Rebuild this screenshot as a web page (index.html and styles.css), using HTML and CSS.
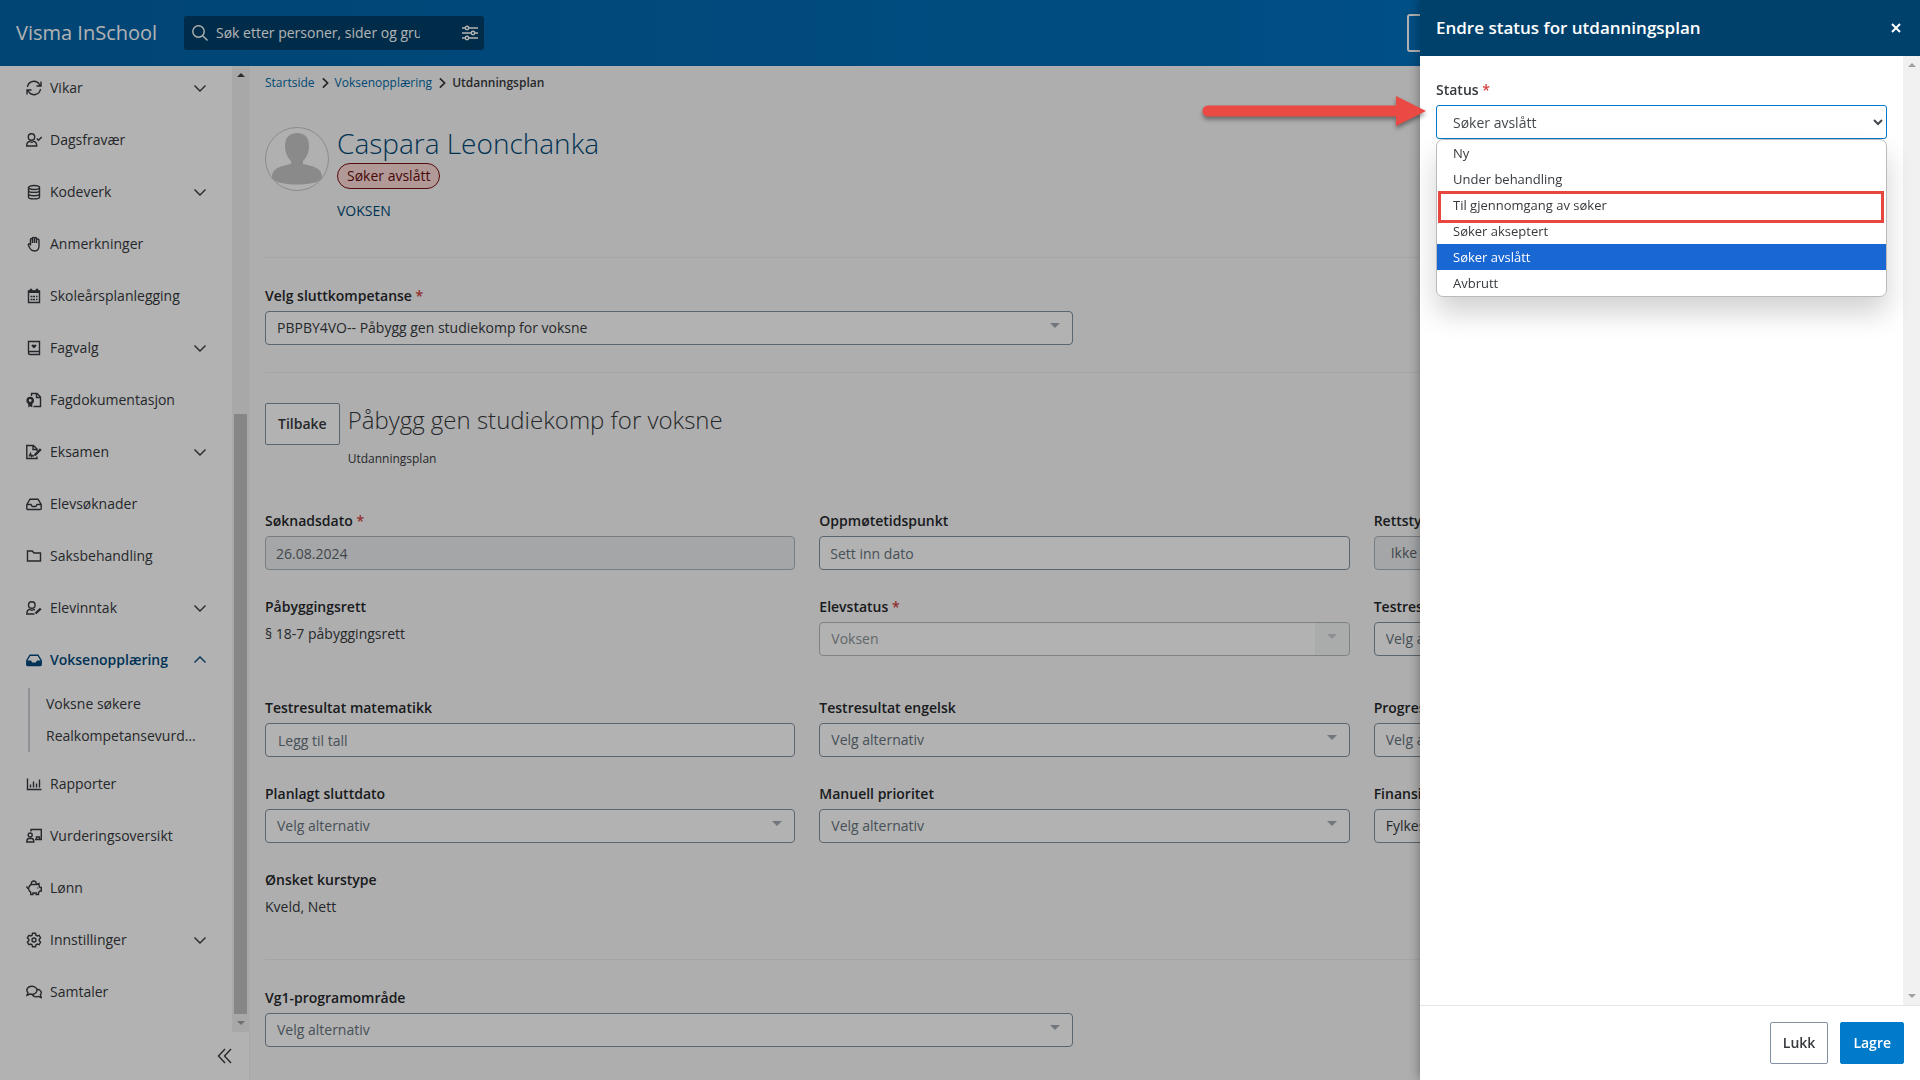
FILE: index.html
```html
<!DOCTYPE html>
<html lang="no">
<head>
  <meta charset="UTF-8">
  <title>Utdanningsplan - Visma InSchool</title>
  <link rel="stylesheet" href="styles.css">
</head>
<body>
  <svg class="sprite" aria-hidden="true">
    <symbol id="chevron" viewBox="0 0 14 14"><path d="M1.500 4.500l5.500 5.500 5.500-5.500"/></symbol>
  </svg>

  <header class="topbar">
    <a class="brand" href="#">Visma InSchool</a>
    <div class="search">
      <svg class="icon" viewBox="0 0 16 16"><circle cx="6.500" cy="6.500" r="5.700"/><path d="M10.700 10.700l4.800 4.800"/></svg>
      <input type="text" aria-label="Søk" placeholder="Søk etter personer, sider og grupper">
      <svg class="icon sliders" viewBox="0 0 16 16"><path d="M0 3h3M7 3h9M0 8h9M13 8h3M0 13h3M7 13h9"/><circle cx="5" cy="3" r="1.700"/><circle cx="11" cy="8" r="1.700"/><circle cx="5" cy="13" r="1.700"/></svg>
    </div>
    <button class="topbar-btn" type="button" aria-label="Meny"></button>
  </header>

  <div class="layout">
    <aside class="sidebar">
      <div class="sidebar-scroll">
        <nav class="nav">
          <a class="nav-item" href="#"><svg class="icon" viewBox="0 0 16 16"><path d="M1.500 7A6.500 6.500 0 0 1 13.500 4.500L15 6M15 1.500V6h-4.500M14.500 9A6.500 6.500 0 0 1 2.500 11.500L1 10M1 14.500V10h4.500"/></svg><span>Vikar</span><svg class="chev"><use href="#chevron"/></svg></a>
          <a class="nav-item" href="#"><svg class="icon" viewBox="0 0 16 16"><circle cx="5.500" cy="5" r="3.200"/><path d="M3.500 9.500C1.500 9.500.7 11.500.7 14h10c0-2.500-.8-4.500-3-4.500-1.200.8-3 .8-4.200 0zM10.800 6.500l1.700 1.700L15.700 5"/></svg><span>Dagsfravær</span></a>
          <a class="nav-item" href="#"><svg class="icon" viewBox="0 0 16 16"><ellipse cx="8" cy="3.500" rx="5.500" ry="2"/><path d="M2.500 3.500v9.500c0 2.500 11 2.500 11 0V3.500M2.500 6.500c0 2.500 11 2.500 11 0M2.500 9.800c0 2.500 11 2.500 11 0"/></svg><span>Kodeverk</span><svg class="chev"><use href="#chevron"/></svg></a>
          <a class="nav-item" href="#"><svg class="icon" viewBox="0 0 16 16"><path d="M4.500 8V3.500c0-1.300 2-1.300 2 0V7 2.300c0-1.300 2-1.300 2 0V7 2.500c0-1.300 2-1.300 2 0V7 4c0-1.300 2.500-1.300 2.500.2V10c0 3-1 5-4.500 5-2.500 0-3.500-.8-4.500-2.500L2.500 9.500c-.7-1.500.8-2.500 2-1V9.500"/></svg><span>Anmerkninger</span></a>
          <a class="nav-item" href="#"><svg class="icon" viewBox="0 0 16 16"><path d="M2.500 3h11v11.500h-11z"/><path class="heavy" d="M2.500 3.800h11M5 .8v3M11 .8v3"/><path d="M4.500 8.500h2M7 8.500h2M10 8.500h1.500M4.500 11.500h2M7 11.500h2M10 11.500h1.500"/></svg><span>Skoleårsplanlegging</span></a>
          <a class="nav-item" href="#"><svg class="icon" viewBox="0 0 16 16"><path d="M2.500 13V1.500h11v13H4a1.500 1.500 0 0 1 0-3h9.500"/><path class="solid" d="M8 8.600L5.700 6.200c-.8-1.500 1.300-2.600 2.300-1.100 1-1.500 3.100-.4 2.300 1.100z"/></svg><span>Fagvalg</span><svg class="chev"><use href="#chevron"/></svg></a>
          <a class="nav-item" href="#"><svg class="icon" viewBox="0 0 16 16"><path d="M5.500 4V1.500h5.500l3.500 3.500v9.500H7.500M10.500 1.500V5.500h4"/><circle class="heavy" cx="4.200" cy="8.500" r="2.600"/><path class="solid" d="M2.300 11.500V15.500l2-1.200 2 1.200V11.500z"/></svg><span>Fagdokumentasjon</span></a>
          <a class="nav-item" href="#"><svg class="icon" viewBox="0 0 16 16"><path d="M11 12.500v2H.8v-13h6.700L11 5v2M7 1.500v4h4M3 12.500l1.500-3 1 3 1-1 1.500.7"/><path class="heavy" d="M8.500 11.500l6.300-6.300"/></svg><span>Eksamen</span><svg class="chev"><use href="#chevron"/></svg></a>
          <a class="nav-item" href="#"><svg class="icon" viewBox="0 0 16 16"><path d="M.8 8.500L4 3.200h8l3.200 5.300v4a1 1 0 0 1-1 1H1.800a1 1 0 0 1-1-1zM.8 8.500h4.200l1.200 2h3.600l1.200-2h4.200"/></svg><span>Elevsøknader</span></a>
          <a class="nav-item" href="#"><svg class="icon" viewBox="0 0 16 16"><path d="M1.500 3h4.700l1.800 2h6.500v8h-13z"/></svg><span>Saksbehandling</span></a>
          <a class="nav-item" href="#"><svg class="icon" viewBox="0 0 16 16"><circle cx="5.800" cy="5" r="3.300"/><path d="M8.500 14H.8c0-3 1-4.500 3-4.500 1.200.8 3 .8 4.200 0l1 .2"/><path class="heavy" d="M9.500 13.500l5.300-5"/></svg><span>Elevinntak</span><svg class="chev"><use href="#chevron"/></svg></a>
          <a class="nav-item active" href="#"><svg class="icon" viewBox="0 0 16 16"><path d="M.8 8.500L4 3.200h8l3.200 5.300v4a1 1 0 0 1-1 1H1.800a1 1 0 0 1-1-1z"/><path class="solid" d="M.8 8.500h4.200l1.200 2h3.600l1.200-2h4.200v5H.8z"/></svg><span>Voksenopplæring</span><svg class="chev up"><use href="#chevron"/></svg></a>
          <div class="subnav">
            <a href="#">Voksne søkere</a>
            <a href="#">Realkompetansevurdering</a>
          </div>
          <a class="nav-item" href="#"><svg class="icon" viewBox="0 0 16 16"><path d="M1.500 2.500v11h14M4.500 11.500v-3M7.500 11.500v-6M10.500 11.500v-4M13.500 11.500v-8"/></svg><span>Rapporter</span></a>
          <a class="nav-item" href="#"><svg class="icon" viewBox="0 0 16 16"><path d="M5 3.500v-2h10.300v10H9M10.500 11v-2h3v2"/><circle cx="4.200" cy="7" r="2"/><path d="M.8 14c0-2 .8-3.500 2-3.500h3c1.200 0 2 1.500 2 3.500z"/></svg><span>Vurderingsoversikt</span></a>
          <a class="nav-item" href="#"><svg class="icon" viewBox="0 0 16 16"><path d="M5.500 4.500h5l2.500-1v2.200l1 1.800h1.300v3.500H14L12.500 12.500v2h-2.300V13H7v1.500H4.700v-2.300C2.500 11 2 8 3.500 6c.5-.7 1.200-1.300 2-1.500zM5.300 4.300c-.5-4.400 5.400-4.400 5 0M3 8.500C1.300 8.500.7 7.500.8 6.300M11.600 7.500v1"/></svg><span>Lønn</span></a>
          <a class="nav-item" href="#"><svg class="icon" viewBox="0 0 16 16"><path d="M6.500 1.300h3l.4 1.900 1.300.7 1.900-.6 1.500 2.500L13.200 7.200v1.600l1.400 1.400-1.500 2.500-1.900-.6-1.300.8-.4 1.800h-3l-.4-1.800-1.300-.8-1.900.6-1.500-2.500 1.400-1.400V7.200L1.400 5.800l1.500-2.500 1.900.6 1.300-.7z"/><circle cx="8" cy="8" r="2"/></svg><span>Innstillinger</span><svg class="chev"><use href="#chevron"/></svg></a>
          <a class="nav-item" href="#"><svg class="icon" viewBox="0 0 16 16"><path d="M1 11.300l1-2.600C-.8 5.500 2 2.300 5.700 2.300s6 2.500 5 5.200c-1 2.500-4 3.300-6.700 2.500zM11.200 5.200c3.500.3 5.200 3.300 3.100 5.800l1 2.600-3-1.200c-2.500.9-5.300 0-6.200-2"/></svg><span>Samtaler</span></a>
        </nav>
        <div class="scrollbar side-bar"><i class="arrow-up"></i><i class="thumb"></i><i class="arrow-down"></i></div>
      </div>
      <button class="collapse" type="button" aria-label="Skjul meny"><svg class="icon" viewBox="0 0 16 16"><path d="M8 1L1.500 8 8 15M14 1L7.500 8l6.500 7"/></svg></button>
    </aside>

    <main class="content">
      <nav class="breadcrumbs">
        <a href="#">Startside</a><svg class="chev"><use href="#chevron"/></svg>
        <a href="#">Voksenopplæring</a><svg class="chev"><use href="#chevron"/></svg>
        <span>Utdanningsplan</span>
      </nav>

      <section class="profile">
        <svg class="avatar" viewBox="0 0 64 64"><circle cx="32" cy="32" r="31.500" fill="#fcfcfc" stroke="#c8c8c8"/><path fill="#c6c6c6" d="M32 6c8 0 12 5 12 13 0 7-3 12-6 15v3c8 2 19 3 19 13 0 10-50 10-50 0 0-10 11-11 19-13v-3c-3-3-6-8-6-15 0-8 4-13 12-13z"/></svg>
        <div>
          <h1>Caspara Leonchanka</h1>
          <span class="badge">Søker avslått</span>
          <p>VOKSEN</p>
        </div>
      </section>

      <section class="block half">
        <div class="field">
          <label for="kompetanse">Velg sluttkompetanse <b>*</b></label>
          <div class="select"><select id="kompetanse" class="filled"><option>PBPBY4VO-- Påbygg gen studiekomp for voksne</option></select></div>
        </div>
      </section>

      <section class="block plan">
        <div class="plan-head">
          <button class="btn" type="button">Tilbake</button>
          <div>
            <h2>Påbygg gen studiekomp for voksne</h2>
            <p>Utdanningsplan</p>
          </div>
        </div>

        <div class="grid">
          <div class="field">
            <label for="soknadsdato">Søknadsdato <b>*</b></label>
            <input id="soknadsdato" type="text" value="26.08.2024" disabled>
          </div>
          <div class="field">
            <label for="oppmote">Oppmøtetidspunkt</label>
            <input id="oppmote" type="text" placeholder="Sett inn dato">
          </div>
          <div class="field">
            <label for="rettstype">Rettstype</label>
            <select id="rettstype" class="locked" disabled><option>Ikke rett</option></select>
          </div>

          <div class="field">
            <h3>Påbyggingsrett</h3>
            <p>§ 18-7 påbyggingsrett</p>
          </div>
          <div class="field">
            <label for="elevstatus">Elevstatus <b>*</b></label>
            <div class="select off"><select id="elevstatus" disabled><option>Voksen</option></select></div>
          </div>
          <div class="field">
            <label for="norsk">Testresultat norsk</label>
            <div class="select"><select id="norsk"><option>Velg alternativ</option></select></div>
          </div>

          <div class="field spaced">
            <label for="matematikk">Testresultat matematikk</label>
            <input id="matematikk" class="number" type="text" placeholder="Legg til tall">
          </div>
          <div class="field spaced">
            <label for="engelsk">Testresultat engelsk</label>
            <div class="select"><select id="engelsk"><option>Velg alternativ</option></select></div>
          </div>
          <div class="field spaced">
            <label for="progresjon">Progresjon</label>
            <div class="select"><select id="progresjon"><option>Velg alternativ</option></select></div>
          </div>

          <div class="field">
            <label for="sluttdato">Planlagt sluttdato</label>
            <div class="select"><select id="sluttdato"><option>Velg alternativ</option></select></div>
          </div>
          <div class="field">
            <label for="prioritet">Manuell prioritet</label>
            <div class="select"><select id="prioritet"><option>Velg alternativ</option></select></div>
          </div>
          <div class="field">
            <label for="finansiering">Finansiering</label>
            <div class="select"><select id="finansiering" class="filled"><option>Fylkeskommune</option></select></div>
          </div>

          <div class="field">
            <h3>Ønsket kurstype</h3>
            <p>Kveld, Nett</p>
          </div>
        </div>
      </section>

      <section class="block half">
        <div class="field">
          <label for="vg1">Vg1-programområde</label>
          <div class="select"><select id="vg1"><option>Velg alternativ</option></select></div>
        </div>
      </section>
    </main>
  </div>

  <div class="backdrop"></div>

  <div class="panel" role="dialog" aria-labelledby="panelTitle">
    <div class="panel-head">
      <h2 id="panelTitle">Endre status for utdanningsplan</h2>
      <button type="button" aria-label="Lukk"><svg viewBox="0 0 10 10"><path d="M1 1l8 8M9 1l-8 8"/></svg></button>
    </div>
    <div class="panel-body">
      <div class="panel-form">
        <label for="status">Status <b>*</b></label>
        <div class="status-wrap">
          <select id="status"><option>Søker avslått</option></select>
          <ul class="menu" role="listbox" aria-label="Status">
            <li role="option">Ny</li>
            <li role="option">Under behandling</li>
            <li role="option" class="marked">Til gjennomgang av søker</li>
            <li role="option">Søker akseptert</li>
            <li role="option" class="selected" aria-selected="true">Søker avslått</li>
            <li role="option">Avbrutt</li>
          </ul>
          <svg class="pointer" viewBox="0 0 228 34"><path d="M6 9.500h188V0l30 15-30 15v-9.500H6a5.500 5.500 0 0 1 0-11z"/></svg>
        </div>
      </div>
      <div class="scrollbar"><i class="arrow-up"></i><i class="arrow-down"></i></div>
    </div>
    <div class="panel-foot">
      <button class="btn" type="button">Lukk</button>
      <button class="btn primary" type="button">Lagre</button>
    </div>
  </div>
</body>
</html>
```

FILE: styles.css
```css
* { box-sizing: border-box; }
body {
  margin: 0;
  height: 100vh;
  overflow: hidden;
  display: flex;
  flex-direction: column;
  background: #fafafa;
  color: #36393d;
  font: 14px/20px "Open Sans", "Noto Sans", sans-serif;
}
h1, h2, h3, p, ul { margin: 0; padding: 0; }
a { color: inherit; text-decoration: none; }
input, select, button { font: inherit; color: inherit; }
.sprite { position: absolute; width: 0; height: 0; }
.icon, .chev {
  width: 16px;
  height: 16px;
  flex: none;
  fill: none;
  stroke: currentColor;
  stroke-width: 1.4;
}
.icon .heavy { stroke-width: 2.4; }
.icon .solid { fill: currentColor; stroke: none; }
.chev { width: 14px; height: 14px; }
.chev.up { transform: rotate(180deg); }

/* top bar */
.topbar {
  height: 66px;
  flex: none;
  display: flex;
  align-items: center;
  padding-left: 16px;
  background: linear-gradient(90deg, #0063a6, #0076c8);
  color: #fff;
}
.brand { width: 168px; font-size: 20px; line-height: 28px; }
.search {
  width: 300px;
  height: 34px;
  display: flex;
  align-items: center;
  gap: 8px;
  padding: 0 6px 0 8px;
  border-radius: 3px;
  background: #004069;
}
.search input {
  width: 204px;
  margin-right: auto;
  padding: 0;
  border: 0;
  background: none;
}
.search input::placeholder { color: #fff; opacity: 1; }
.topbar-btn {
  width: 140px;
  height: 38px;
  margin: 0 373px 0 auto;
  border: 2px solid #fff;
  border-radius: 3px;
  background: none;
}

/* sidebar */
.layout { flex: 1; min-height: 0; display: flex; }
.sidebar {
  width: 250px;
  flex: none;
  display: flex;
  flex-direction: column;
  border-right: 1px solid #f3f3f3;
  background: #fff;
}
.sidebar-scroll { flex: 1; min-height: 0; display: flex; }
.nav {
  flex: 1;
  min-width: 0;
  overflow: hidden;
  padding: 12px 25px 0 26px;
}
.nav-item { display: flex; align-items: center; gap: 8px; height: 20px; margin-bottom: 32px; }
.nav-item .chev { margin-left: auto; }
.nav-item.active { margin-bottom: 18px; color: #004a7b; font-weight: 600; }
.subnav {
  margin: 0 4px 22px 2px;
  padding-left: 16px;
  border-left: 2px solid #cdd2d8;
}
.subnav a {
  display: block;
  line-height: 32px;
  overflow: hidden;
  text-overflow: ellipsis;
  white-space: nowrap;
}
.collapse {
  height: 48px;
  flex: none;
  padding: 0 16px 2px 0;
  border: 0;
  background: none;
  text-align: right;
}
.collapse .icon { display: inline-block; vertical-align: middle; }

.scrollbar {
  width: 17px;
  flex: none;
  display: flex;
  flex-direction: column;
  align-items: center;
  justify-content: space-between;
  padding: 7px 0;
  background: #f1f1f1;
}
.scrollbar .thumb { width: 13px; flex: 0 0 63%; margin: auto 0 7px; background: #c1c1c1; }
.arrow-up, .arrow-down { border: 4px solid transparent; }
.arrow-up { border-top: 0; border-bottom-color: #a0a0a0; }
.arrow-down { border-bottom: 0; border-top-color: #a0a0a0; }
.side-bar .arrow-up { border-bottom-color: #404040; }

/* content */
.content { flex: 1; min-width: 0; overflow: hidden; padding: 7px 16px 0 15px; }
.breadcrumbs {
  display: flex;
  align-items: center;
  gap: 4px;
  font-size: 12px;
}
.breadcrumbs a { color: #0069a6; }
.breadcrumbs .chev { width: 12px; height: 12px; transform: rotate(-90deg); stroke-width: 2; }
.breadcrumbs span { font-weight: 600; }
.profile {
  height: 164px;
  display: flex;
  gap: 8px;
  padding-top: 32px;
  color: #004977;
}
.avatar { width: 64px; height: 64px; margin-top: 2px; }
h1 { font-size: 28px; line-height: 36px; font-weight: 300; }
.badge {
  display: inline-block;
  margin-top: 2px;
  padding: 2px 9px;
  border: 1px solid #7a0f10;
  border-radius: 14px;
  background: #fcdcd9;
  color: #6a0b0b;
}
.profile p { margin-top: 12px; }
.block { padding-top: 28px; border-top: 1px solid #ebedef; }
.half { height: 115px; }
.half .field { width: calc(50% - 12px); }
.field label, .field h3, .panel label { display: block; font-size: 14px; line-height: 20px; font-weight: 600; }
.field label, .field h3 { color: #26282b; }
.field p { padding-top: 7px; }
label b { color: #d43f3f; font-weight: 600; }
.field input, .field select {
  display: block;
  width: 100%;
  height: 34px;
  padding: 0 11px;
  border: 1px solid #8291a1;
  border-radius: 4px;
  background: #fff;
  color: #66737d;
  appearance: none;
}
.field input, .select, .field .locked { margin-top: 5px; }
.field input { padding: 0 10px; }
.field input.number { padding: 0 12px; }
.field input::placeholder { color: #66737d; opacity: 1; }
.field input:disabled, .field .locked { background: #eceef0; border-color: #aab4bc; color: #5e666e; opacity: 1; }
.field .locked { padding: 0 16px; }
.field select.filled { color: #36393d; }
.select { position: relative; }
.select::after {
  content: "";
  position: absolute;
  top: 12px;
  right: 13px;
  border: 5px solid transparent;
  border-top-color: #a3abb2;
  border-bottom: 0;
}
.off select { opacity: 1; border-color: #b4bac0; color: #8d9499; background: linear-gradient(#f4f6f7, #f4f6f7) right / 34px 100% no-repeat #fff; }
.off::after { border-top-color: #c9ced1; }

.plan { padding-top: 30px; height: 587px; }
.plan-head { display: flex; gap: 8px; height: 108px; }
.plan-head h2 { font-size: 24px; line-height: 34px; font-weight: 300; }
.plan-head p { margin-top: 12px; font-size: 12px; }
.btn {
  height: 42px;
  padding: 0 12px;
  border: 1px solid #8291a1;
  border-radius: 2px;
  background: #fff;
  font-weight: 600;
}
.btn.primary { background: #007aca; border-color: #007aca; color: #fff; }
.grid { display: grid; grid-template-columns: repeat(3, 1fr); gap: 27px 24px; }
.spaced { padding-top: 15px; }

/* dialog */
.backdrop { position: fixed; inset: 0; background: rgba(0, 0, 0, 0.3); }
.panel {
  position: fixed;
  top: 0;
  right: 0;
  bottom: 0;
  width: 500px;
  display: flex;
  flex-direction: column;
  background: #fff;
  box-shadow: 0 0 12px rgba(0, 0, 0, 0.4);
}
.panel-head {
  height: 56px;
  flex: none;
  display: flex;
  align-items: center;
  justify-content: space-between;
  padding: 0 15px 0 16px;
  background: #00416c;
  color: #fff;
}
.panel-head h2 { font-size: 17px; line-height: 24px; font-weight: 600; }
.panel-head button { padding: 4px; border: 0; background: none; }
.panel-head svg { display: block; width: 10px; height: 10px; stroke: #fff; stroke-width: 2; }
.panel-body { flex: 1; display: flex; }
.panel-form { flex: 1; padding: 24px 16px; }
.status-wrap { position: relative; margin-top: 5px; }
#status {
  display: block;
  width: 100%;
  height: 34px;
  padding: 0 0 0 12px;
  border: 1px solid #0078c8;
  border-radius: 3px;
  background: #fff;
  color: #45494d;
}
.menu {
  position: absolute;
  top: 100%;
  left: 0;
  right: 0;
  border: 1px solid #bbb;
  border-radius: 7px;
  background: #fff;
  box-shadow: 0 16px 28px rgba(0, 0, 0, 0.18);
  font-size: 13px;
  list-style: none;
}
.menu li { position: relative; height: 26px; padding: 0 16px; line-height: 26px; }
.menu .selected { background: #1967d2; color: #fff; }
/* red frame round the step to choose */
.menu .marked::after {
  content: "";
  position: absolute;
  z-index: 1;
  inset: -1px 2px -5px 1px;
  border: 3px solid #e8473f;
}
.pointer {
  position: absolute;
  top: -9px;
  right: 100%;
  margin-right: 6px;
  width: 228px;
  height: 34px;
  overflow: visible;
  fill: #ea4a43;
  filter: drop-shadow(0 3px 2px rgba(0, 0, 0, 0.4));
}
.panel-foot {
  height: 75px;
  flex: none;
  display: flex;
  align-items: center;
  justify-content: flex-end;
  gap: 12px;
  padding: 0 16px;
  border-top: 1px solid #e5e5e5;
}
```
